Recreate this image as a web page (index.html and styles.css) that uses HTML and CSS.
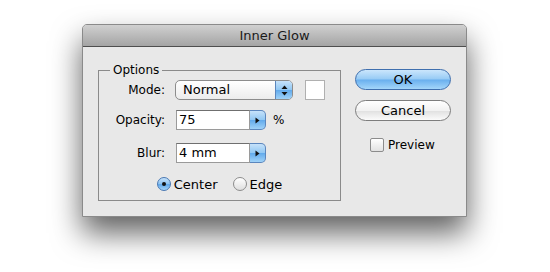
FILE: index.html
```html
<!DOCTYPE html>
<html lang="en">
<head>
    <meta charset="UTF-8">
    <meta name="viewport" content="width=device-width, initial-scale=1.0">
    <title>Inner Glow</title>
    <link rel="stylesheet" href="styles.css">
</head>
<body>
    <div class="dialog">
        <div class="titlebar">Inner Glow</div>

        <div class="content">
            <fieldset class="options">
                <legend>Options</legend>

                <div class="row">
                    <label>Mode:</label>
                    <div class="popup">
                        <span class="popup-text">Normal</span>
                        <span class="stepper">
                            <svg width="7" height="11" viewBox="0 0 7 11">
                                <path d="M3.5 0.5 L6.5 4 L0.5 4 Z" fill="#111"/>
                                <path d="M3.5 10.5 L6.5 7 L0.5 7 Z" fill="#111"/>
                            </svg>
                        </span>
                    </div>
                    <span class="swatch"></span>
                </div>

                <div class="row row-opacity">
                    <label>Opacity:</label>
                    <div class="field">
                        <span class="value">75</span>
                    </div>
                    <span class="arrow">
                        <svg width="5" height="7" viewBox="0 0 5 7"><path d="M0.5 0.5 L4.5 3.5 L0.5 6.5 Z" fill="#111"/></svg>
                    </span>
                    <span class="unit">%</span>
                </div>

                <div class="row row-blur">
                    <label>Blur:</label>
                    <div class="field">
                        <span class="value">4 mm</span>
                    </div>
                    <span class="arrow">
                        <svg width="5" height="7" viewBox="0 0 5 7"><path d="M0.5 0.5 L4.5 3.5 L0.5 6.5 Z" fill="#111"/></svg>
                    </span>
                </div>

                <div class="radios">
                    <label class="radio"><span class="dot on"></span>Center</label>
                    <label class="radio"><span class="dot"></span>Edge</label>
                </div>
            </fieldset>

            <div class="actions">
                <button class="btn btn-default">OK</button>
                <button class="btn">Cancel</button>
                <label class="check"><span class="box"></span>Preview</label>
            </div>
        </div>
    </div>
</body>
</html>
```

FILE: styles.css
```css
/* page */
html {
    background: #ffffff;
}

body {
    margin: 0;
    min-height: 272px;
    box-sizing: border-box;
    padding: 24px 0 0 82px;
    font-family: "DejaVu Sans", "Liberation Sans", sans-serif;
    font-size: 12px;
    color: #000;
}

/* window */
.dialog {
    width: 385px;
    box-sizing: border-box;
    border: 1px solid #8a8a8a;
    border-radius: 5px 5px 0 0;
    background: #e8e8e8;
    box-shadow: 0 16px 30px rgba(0, 0, 0, 0.62);
}

.titlebar {
    height: 21px;
    line-height: 21px;
    text-align: center;
    font-size: 13px;
    color: #1a1a1a;
    background: linear-gradient(#d0d0d0, #a4a4a4);
    border-bottom: 1px solid #4e4e4e;
    border-radius: 4px 4px 0 0;
}

.content {
    display: flex;
    align-items: flex-start;
    padding: 0 15px 15px 15px;
}

/* group box */
.options {
    width: 243px;
    box-sizing: border-box;
    margin: 16px 14px 0 0;
    padding: 3px 11px 6px 11px;
    border: 1px solid #8a8a8a;
}

.options legend {
    padding: 0 3px;
    line-height: 14px;
}

.row {
    display: flex;
    align-items: center;
    height: 20px;
}

.row label {
    width: 55px;
    margin-right: 10px;
    text-align: right;
}

.row-opacity {
    margin-top: 10px;
}

.row-blur {
    margin-top: 13px;
}

/* popup menu */
.popup {
    display: flex;
    width: 118px;
    height: 20px;
    box-sizing: border-box;
    border: 1px solid #8c8c8c;
    border-radius: 5px;
    background: linear-gradient(#ffffff, #ececec);
    overflow: hidden;
}

.popup-text {
    flex: 1;
    padding-left: 7px;
    line-height: 18px;
    font-size: 13px;
}

.stepper {
    width: 16px;
    display: flex;
    align-items: center;
    justify-content: center;
    border-left: 1px solid #5b86bd;
    background: linear-gradient(#c6e2fa 0%, #92c8f3 48%, #63abec 52%, #9fd2f8 100%);
}

.swatch {
    width: 20px;
    height: 20px;
    box-sizing: border-box;
    margin-left: 12px;
    border: 1px solid #b0b0b0;
    background: #fff;
}

/* number fields */
.field {
    width: 74px;
    height: 20px;
    box-sizing: border-box;
    margin-left: 1px;
    border: 1px solid #9a9a9a;
    border-top-color: #6f6f6f;
    background: #fff;
    line-height: 18px;
    font-size: 13px;
    padding-left: 2px;
}

.arrow {
    width: 16px;
    height: 20px;
    box-sizing: border-box;
    display: flex;
    align-items: center;
    justify-content: center;
    border: 1px solid #5b86bd;
    border-left: none;
    border-radius: 0 5px 5px 0;
    background: linear-gradient(#c6e2fa 0%, #92c8f3 48%, #63abec 52%, #9fd2f8 100%);
}

.unit {
    margin-left: 7px;
}

/* radio buttons */
.radios {
    display: flex;
    justify-content: center;
    align-items: center;
    height: 20px;
    margin-top: 11px;
}

.radio {
    display: flex;
    align-items: center;
    font-size: 13px;
}

.radio + .radio {
    margin-left: 15px;
}

.dot {
    width: 14px;
    height: 14px;
    box-sizing: border-box;
    margin-right: 3px;
    border: 1px solid #8c8c8c;
    border-radius: 50%;
    background: linear-gradient(#ffffff, #dedede);
    display: flex;
    align-items: center;
    justify-content: center;
}

.dot.on {
    border-color: #4a78b3;
    background: linear-gradient(#c6e2fa 0%, #8cc3f2 48%, #5fa7ea 55%, #a6d6f9 100%);
}

.dot.on::after {
    content: "";
    width: 4px;
    height: 4px;
    border-radius: 50%;
    background: #111;
}

/* buttons */
.actions {
    display: flex;
    flex-direction: column;
    align-items: flex-start;
    padding-top: 22px;
}

.btn {
    width: 96px;
    height: 21px;
    margin: 0;
    padding: 0;
    border: 1px solid #7d7d7d;
    border-radius: 11px;
    background: linear-gradient(#ffffff 0%, #f2f2f2 50%, #e2e2e2 55%, #fbfbfb 100%);
    font-family: "DejaVu Sans", "Liberation Sans", sans-serif;
    font-size: 13px;
    color: #000;
}

.btn + .btn {
    margin-top: 10px;
}

.btn-default {
    border-color: #3f6fae;
    background: linear-gradient(#cbe6fc 0%, #97cbf5 48%, #69afee 52%, #a4d6fa 100%);
}

.check {
    display: flex;
    align-items: center;
    margin: 17px 0 0 15px;
    font-size: 12px;
}

.check .box {
    width: 14px;
    height: 14px;
    box-sizing: border-box;
    margin-right: 4px;
    border: 1px solid #8c8c8c;
    border-radius: 2px;
    background: linear-gradient(#ffffff, #e2e2e2);
}
```
